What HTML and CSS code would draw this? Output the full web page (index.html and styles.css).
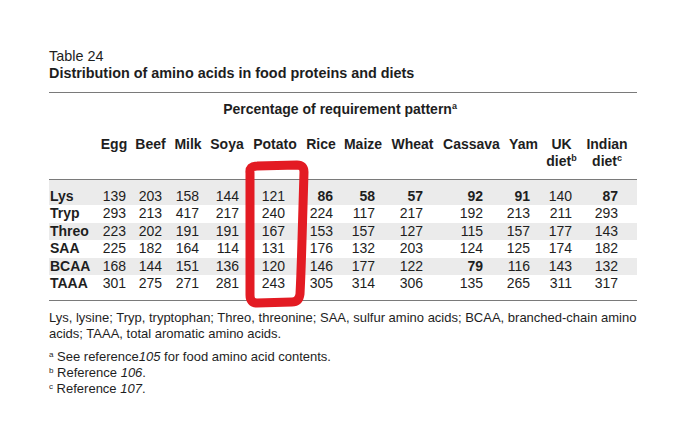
FILE: index.html
```html
<!DOCTYPE html>
<html>
<head>
<meta charset="utf-8">
<link rel="stylesheet" href="styles.css">
</head>
<body>
<div class="page">
  <div class="caption">
    <div class="label">Table 24</div>
    <div class="title">Distribution of amino acids in food proteins and diets</div>
  </div>
  <table class="data">
    <colgroup>
      <col class="w-lab"><col class="w-egg"><col class="w-beef"><col class="w-milk"><col class="w-soya"><col class="w-potato"><col class="w-rice"><col class="w-maize"><col class="w-wheat"><col class="w-cassava"><col class="w-yam"><col class="w-uk"><col class="w-indian">
    </colgroup>
    <thead>
      <tr class="super">
        <th colspan="13">Percentage of requirement pattern<sup>a</sup></th>
      </tr>
      <tr class="heads">
        <th></th><th>Egg</th><th>Beef</th><th>Milk</th><th>Soya</th><th>Potato</th><th>Rice</th><th>Maize</th><th>Wheat</th><th>Cassava</th><th>Yam</th><th>UK<br>diet<sup>b</sup></th><th class="h-indian">Indian<br>diet<sup>c</sup></th>
      </tr>
    </thead>
    <tbody>
      <tr class="shade first">
        <th>Lys</th><td class="egg">139</td><td class="beef">203</td><td class="milk">158</td><td class="soya">144</td><td class="potato">121</td><td class="rice b">86</td><td class="maize b">58</td><td class="wheat b">57</td><td class="cassava b">92</td><td class="yam b">91</td><td class="uk">140</td><td class="indian b">87</td>
      </tr>
      <tr>
        <th>Tryp</th><td class="egg">293</td><td class="beef">213</td><td class="milk">417</td><td class="soya">217</td><td class="potato">240</td><td class="rice">224</td><td class="maize">117</td><td class="wheat">217</td><td class="cassava">192</td><td class="yam">213</td><td class="uk">211</td><td class="indian">293</td>
      </tr>
      <tr class="shade">
        <th>Threo</th><td class="egg">223</td><td class="beef">202</td><td class="milk">191</td><td class="soya">191</td><td class="potato">167</td><td class="rice">153</td><td class="maize">157</td><td class="wheat">127</td><td class="cassava">115</td><td class="yam">157</td><td class="uk">177</td><td class="indian">143</td>
      </tr>
      <tr>
        <th>SAA</th><td class="egg">225</td><td class="beef">182</td><td class="milk">164</td><td class="soya">114</td><td class="potato">131</td><td class="rice">176</td><td class="maize">132</td><td class="wheat">203</td><td class="cassava">124</td><td class="yam">125</td><td class="uk">174</td><td class="indian">182</td>
      </tr>
      <tr class="shade">
        <th>BCAA</th><td class="egg">168</td><td class="beef">144</td><td class="milk">151</td><td class="soya">136</td><td class="potato">120</td><td class="rice">146</td><td class="maize">177</td><td class="wheat">122</td><td class="cassava b">79</td><td class="yam">116</td><td class="uk">143</td><td class="indian">132</td>
      </tr>
      <tr class="last">
        <th>TAAA</th><td class="egg">301</td><td class="beef">275</td><td class="milk">271</td><td class="soya">281</td><td class="potato">243</td><td class="rice">305</td><td class="maize">314</td><td class="wheat">306</td><td class="cassava">135</td><td class="yam">265</td><td class="uk">311</td><td class="indian">317</td>
      </tr>
    </tbody>
  </table>
  <div class="notes">
    <p class="abbr">Lys, lysine; Tryp, tryptophan; Threo, threonine; SAA, sulfur amino acids; BCAA, branched-chain amino acids; TAAA, total aromatic amino acids.</p>
    <div class="refs">
      <p><sup>a</sup> See reference<i>105</i> for food amino acid contents.</p>
      <p><sup>b</sup> Reference <i>106</i>.</p>
      <p><sup>c</sup> Reference <i>107</i>.</p>
    </div>
  </div>
  <svg class="mark" width="685" height="423" viewBox="0 0 685 423">
    <path d="M 250 173 Q 249 166 257 166 L 297 165 Q 304 165 304 172 L 302 240 Q 301 275 300 294 Q 299 302 292 302 L 257 303 Q 250 303 250 295 Z" fill="none" stroke="#e31b23" stroke-width="9" stroke-linejoin="round" stroke-linecap="round"/>
  </svg>
</div>
</body>
</html>
```

FILE: styles.css
```css
html, body {
  margin: 0;
  padding: 0;
  background: #ffffff;
}
.page {
  position: relative;
  width: 685px;
  height: 423px;
  overflow: hidden;
  padding: 48px 0 0 49px;
  box-sizing: border-box;
  font-family: "Liberation Sans", Arial, sans-serif;
  color: #1e1e1e;
}
.caption {
  font-size: 14.4px;
  line-height: 17px;
}
.caption .title {
  font-weight: bold;
}
.data {
  margin-top: 10px;
  width: 588px;
  table-layout: fixed;
  border-collapse: collapse;
  border-top: 1.5px solid #7a7a7a;
  border-bottom: 1.5px solid #7a7a7a;
  font-size: 14px;
}
.w-lab { width: 48px; }
.w-egg { width: 34px; }
.w-beef { width: 39px; }
.w-milk { width: 36px; }
.w-soya { width: 42px; }
.w-potato { width: 54px; }
.w-rice { width: 38px; }
.w-maize { width: 46px; }
.w-wheat { width: 53px; }
.w-cassava { width: 65px; }
.w-yam { width: 39px; }
.w-uk { width: 37px; }
.w-indian { width: 57px; }
.data th, .data td {
  padding: 0;
  line-height: 17.6px;
  white-space: nowrap;
}
.data thead th {
  font-weight: bold;
  text-align: center;
  vertical-align: top;
  line-height: 17px;
}
.super th {
  padding-top: 8px;
  padding-right: 6px;
}
.heads th {
  padding-top: 18px;
  padding-bottom: 8.5px;
  border-bottom: 1.5px solid #7a7a7a;
}
.heads th.h-indian {
  padding-right: 3px;
}
sup {
  font-size: 9px;
  line-height: 0;
  vertical-align: 5px;
}
.data tbody th {
  text-align: left;
  font-weight: bold;
  padding-left: 1px;
}
.data td {
  text-align: right;
}
.data td.b {
  font-weight: bold;
}
.shade th, .shade td {
  background: #ebebeb;
}
.first th, .first td {
  padding-top: 8px;
}
.last th, .last td {
  padding-bottom: 7px;
}
td.egg { padding-right: 5px; }
td.beef { padding-right: 8px; }
td.milk { padding-right: 7px; }
td.soya { padding-right: 9px; }
td.potato { padding-right: 17px; }
td.rice { padding-right: 7px; }
td.maize { padding-right: 11px; }
td.wheat { padding-right: 16px; }
td.cassava { padding-right: 21px; }
td.yam { padding-right: 13px; }
td.uk { padding-right: 8px; }
td.indian { padding-right: 19px; }
.notes {
  width: 592px;
  font-size: 13px;
  line-height: 16px;
  margin-top: 9px;
}
.notes p {
  margin: 0;
}
.refs {
  margin-top: 7px;
}
.refs sup {
  font-size: 8px;
  vertical-align: 4px;
}
.mark {
  position: absolute;
  left: 0;
  top: 0;
  pointer-events: none;
}
```
